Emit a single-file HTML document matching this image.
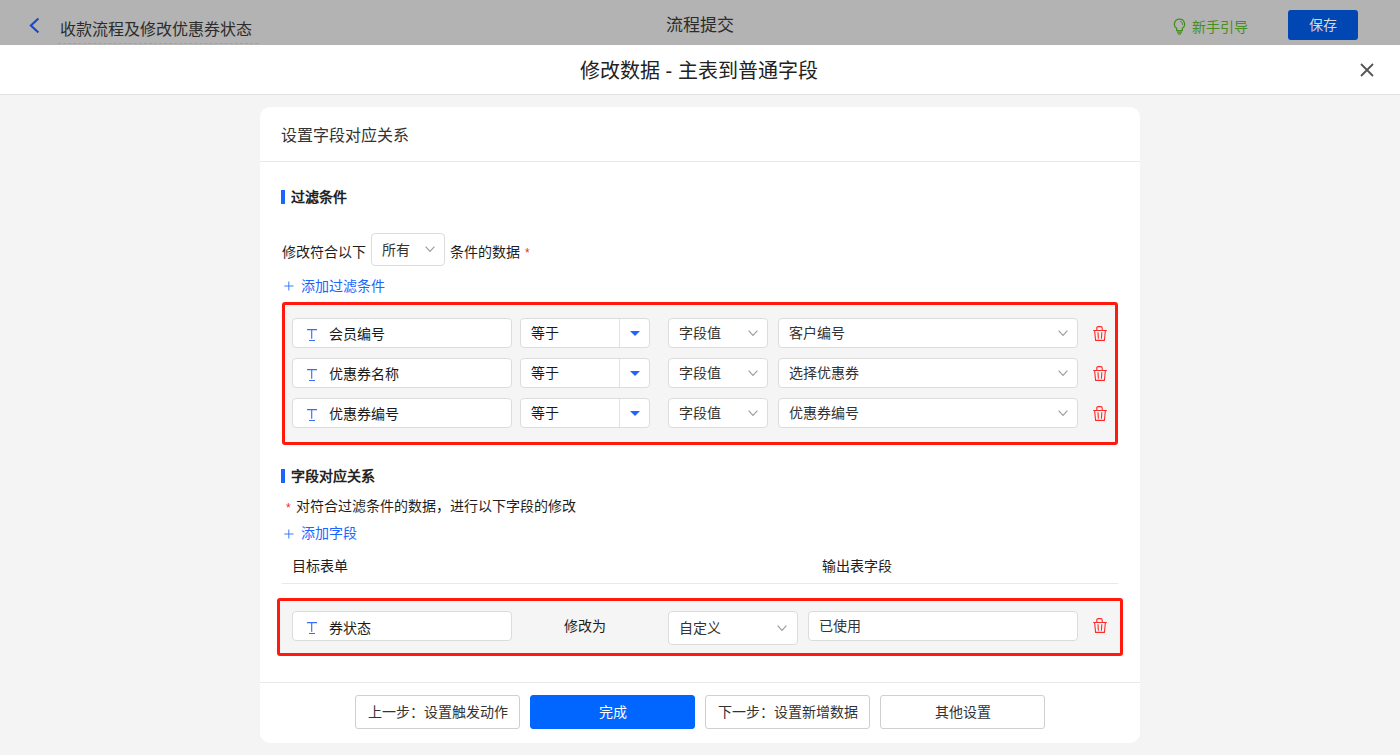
<!DOCTYPE html>
<html lang="zh-CN"><head><meta charset="utf-8">
<style>
*{box-sizing:border-box;margin:0;padding:0}
html,body{width:1400px;height:755px;overflow:hidden;background:#f4f4f4;font-family:"Liberation Sans",sans-serif;color:#333}
.abs{position:absolute}
.topbar{position:absolute;left:0;top:0;width:1400px;height:45px;background:#b3b3b3}
.mhead{position:absolute;left:0;top:45px;width:1400px;height:50px;background:#fff;border-bottom:1px solid #e3e3e3}
.card{position:absolute;left:260px;top:107px;width:880px;height:636px;background:#fff;border-radius:10px}
.t{position:absolute;white-space:nowrap;line-height:1}
.inp{position:absolute;background:#fff;border:1px solid #dcdcdc;border-radius:4px}
.redbox{position:absolute;border:3px solid #ff1a0d;background:#f5f5f5;border-radius:3px}
.chev{position:absolute;width:7px;height:7px;border-right:1px solid #888;border-bottom:1px solid #888;transform:rotate(45deg)}
.tri{position:absolute;width:0;height:0;border-left:5px solid transparent;border-right:5px solid transparent;border-top:5.5px solid #1a66ff}
.btn{position:absolute;top:695px;height:34px;border:1px solid #d0d0d0;border-radius:3px;background:#fff;font-size:14px;text-align:center;line-height:32px;color:#333}
</style></head>
<body>
<div class="topbar">
  <svg class="abs" style="left:28px;top:16px" width="13" height="19" viewBox="0 0 13 19"><path d="M10.4 2.4L2.9 9.4L10.4 16.4" fill="none" stroke="#1a47c9" stroke-width="2.1"/></svg>
  <div class="t" style="left:60px;top:22px;font-size:16px;color:#2c2c2c">收款流程及修改优惠券状态</div>
  <div class="abs" style="left:58px;top:43px;width:200px;border-top:1px dashed #a0a0a0"></div>
  <div class="t" style="left:666px;top:17px;font-size:17px;color:#2c2c2c">流程提交</div>
  <svg class="abs" style="left:1173px;top:18px" width="13" height="17" viewBox="0 0 13 17"><path d="M6.5 1.2a5 5 0 0 0-2.8 9.2v2.3h5.6v-2.3a5 5 0 0 0-2.8-9.2z" fill="none" stroke="#468f1c" stroke-width="1.3"/><path d="M4 14.2h5M4.8 15.8h3.4" stroke="#468f1c" stroke-width="1.2"/><path d="M7.2 3.2a3.6 3.6 0 0 1 2.4 3.6" fill="none" stroke="#468f1c" stroke-width="1"/></svg>
  <div class="t" style="left:1192px;top:20px;font-size:14px;color:#468f1c">新手引导</div>
  <div class="abs" style="left:1288px;top:10px;width:70px;height:30px;background:#0047b3;border-radius:3px;color:#d8d8d8;font-size:14px;text-align:center;line-height:30px">保存</div>
</div>
<div class="mhead">
  <div class="t" style="left:580px;top:16px;font-size:20px;color:#222">修改数据 - 主表到普通字段</div>
  <svg class="abs" style="left:1360px;top:18px" width="14" height="14" viewBox="0 0 14 14"><path d="M1 1L13 13M13 1L1 13" stroke="#555" stroke-width="1.8"/></svg>
</div>
<div class="card"></div>
<div class="t" style="left:281px;top:128px;font-size:16px;color:#333">设置字段对应关系</div>
<div class="abs" style="left:260px;top:161px;width:880px;border-top:1px solid #e8e8e8"></div>
<div class="abs" style="left:281px;top:190px;width:4px;height:14px;background:#1a66ff"></div>
<div class="t" style="left:291px;top:190px;font-size:14px;font-weight:bold;color:#222">过滤条件</div>
<div class="t" style="left:282px;top:245px;font-size:14px;color:#1e1e1e">修改符合以下</div>
<div class="inp" style="left:371px;top:233px;width:74px;height:33px"></div>
<div class="t" style="left:382px;top:243px;font-size:14px;color:#333">所有</div>
<svg class="abs" style="left:425px;top:246px" width="11" height="7" viewBox="0 0 11 7"><path d="M0.6 0.6L5 5.4L9.4 0.6" fill="none" stroke="#9a9a9a" stroke-width="1.1"/></svg>
<div class="t" style="left:450px;top:245px;font-size:14px;color:#1e1e1e">条件的数据</div>
<div class="t" style="left:525px;top:247px;font-size:12px;color:#f5222d">*</div>
<svg class="abs" style="left:284px;top:281px" width="10" height="10" viewBox="0 0 10 10"><path d="M4.8 0.5V9.5M0.3 5H9.5" stroke="#3d7bff" stroke-width="1"/></svg>
<div class="t" style="left:301px;top:279px;font-size:14px;color:#1a66ff">添加过滤条件</div>
<div class="redbox" style="left:282px;top:302px;width:836px;height:143px"></div>
<div class="inp" style="left:292px;top:318px;width:220px;height:30px"></div>
<svg class="abs" style="left:307px;top:329px" width="11" height="13" viewBox="0 0 11 13"><path d="M0 0.6H10M4.7 0.6V9.7M2 11.5H8" fill="none" stroke="#3a6bff" stroke-width="1.15"/></svg>
<div class="t" style="left:329px;top:327px;font-size:14px;color:#1a1a1a">会员编号</div>
<div class="inp" style="left:520px;top:318px;width:130px;height:30px"></div>
<div class="abs" style="left:619px;top:319px;height:28px;border-left:1px solid #e3e3e3"></div>
<div class="tri" style="left:630px;top:331px"></div>
<div class="t" style="left:531px;top:326px;font-size:14px;color:#1a1a1a">等于</div>
<div class="inp" style="left:668px;top:318px;width:100px;height:30px"></div>
<div class="t" style="left:679px;top:326px;font-size:14px;color:#333">字段值</div>
<svg class="abs" style="left:748px;top:330px" width="11" height="7" viewBox="0 0 11 7"><path d="M0.6 0.6L5 5.4L9.4 0.6" fill="none" stroke="#9a9a9a" stroke-width="1.1"/></svg>
<div class="inp" style="left:778px;top:318px;width:300px;height:30px"></div>
<div class="t" style="left:789px;top:326px;font-size:14px;color:#333">客户编号</div>
<svg class="abs" style="left:1058px;top:330px" width="11" height="7" viewBox="0 0 11 7"><path d="M0.6 0.6L5 5.4L9.4 0.6" fill="none" stroke="#9a9a9a" stroke-width="1.1"/></svg>
<svg class="abs" style="left:1092px;top:325px" width="16" height="17" viewBox="0 0 16 17"><path d="M1.2 5.5H14.8M4.8 5.5V3a1.4 1.4 0 0 1 1.4-1.4h2.6a1.4 1.4 0 0 1 1.4 1.4V5.5M2.6 5.5L3.6 15.4H12.4L13.4 5.5M6 7.2L6.4 13.8M9.8 7.2L9.4 13.8" fill="none" stroke="#ff2a2a" stroke-width="1.1"/></svg>
<div class="inp" style="left:292px;top:358px;width:220px;height:30px"></div>
<svg class="abs" style="left:307px;top:369px" width="11" height="13" viewBox="0 0 11 13"><path d="M0 0.6H10M4.7 0.6V9.7M2 11.5H8" fill="none" stroke="#3a6bff" stroke-width="1.15"/></svg>
<div class="t" style="left:329px;top:367px;font-size:14px;color:#1a1a1a">优惠券名称</div>
<div class="inp" style="left:520px;top:358px;width:130px;height:30px"></div>
<div class="abs" style="left:619px;top:359px;height:28px;border-left:1px solid #e3e3e3"></div>
<div class="tri" style="left:630px;top:371px"></div>
<div class="t" style="left:531px;top:366px;font-size:14px;color:#1a1a1a">等于</div>
<div class="inp" style="left:668px;top:358px;width:100px;height:30px"></div>
<div class="t" style="left:679px;top:366px;font-size:14px;color:#333">字段值</div>
<svg class="abs" style="left:748px;top:370px" width="11" height="7" viewBox="0 0 11 7"><path d="M0.6 0.6L5 5.4L9.4 0.6" fill="none" stroke="#9a9a9a" stroke-width="1.1"/></svg>
<div class="inp" style="left:778px;top:358px;width:300px;height:30px"></div>
<div class="t" style="left:789px;top:366px;font-size:14px;color:#333">选择优惠券</div>
<svg class="abs" style="left:1058px;top:370px" width="11" height="7" viewBox="0 0 11 7"><path d="M0.6 0.6L5 5.4L9.4 0.6" fill="none" stroke="#9a9a9a" stroke-width="1.1"/></svg>
<svg class="abs" style="left:1092px;top:365px" width="16" height="17" viewBox="0 0 16 17"><path d="M1.2 5.5H14.8M4.8 5.5V3a1.4 1.4 0 0 1 1.4-1.4h2.6a1.4 1.4 0 0 1 1.4 1.4V5.5M2.6 5.5L3.6 15.4H12.4L13.4 5.5M6 7.2L6.4 13.8M9.8 7.2L9.4 13.8" fill="none" stroke="#ff2a2a" stroke-width="1.1"/></svg>
<div class="inp" style="left:292px;top:398px;width:220px;height:30px"></div>
<svg class="abs" style="left:307px;top:409px" width="11" height="13" viewBox="0 0 11 13"><path d="M0 0.6H10M4.7 0.6V9.7M2 11.5H8" fill="none" stroke="#3a6bff" stroke-width="1.15"/></svg>
<div class="t" style="left:329px;top:407px;font-size:14px;color:#1a1a1a">优惠券编号</div>
<div class="inp" style="left:520px;top:398px;width:130px;height:30px"></div>
<div class="abs" style="left:619px;top:399px;height:28px;border-left:1px solid #e3e3e3"></div>
<div class="tri" style="left:630px;top:411px"></div>
<div class="t" style="left:531px;top:406px;font-size:14px;color:#1a1a1a">等于</div>
<div class="inp" style="left:668px;top:398px;width:100px;height:30px"></div>
<div class="t" style="left:679px;top:406px;font-size:14px;color:#333">字段值</div>
<svg class="abs" style="left:748px;top:410px" width="11" height="7" viewBox="0 0 11 7"><path d="M0.6 0.6L5 5.4L9.4 0.6" fill="none" stroke="#9a9a9a" stroke-width="1.1"/></svg>
<div class="inp" style="left:778px;top:398px;width:300px;height:30px"></div>
<div class="t" style="left:789px;top:406px;font-size:14px;color:#333">优惠券编号</div>
<svg class="abs" style="left:1058px;top:410px" width="11" height="7" viewBox="0 0 11 7"><path d="M0.6 0.6L5 5.4L9.4 0.6" fill="none" stroke="#9a9a9a" stroke-width="1.1"/></svg>
<svg class="abs" style="left:1092px;top:405px" width="16" height="17" viewBox="0 0 16 17"><path d="M1.2 5.5H14.8M4.8 5.5V3a1.4 1.4 0 0 1 1.4-1.4h2.6a1.4 1.4 0 0 1 1.4 1.4V5.5M2.6 5.5L3.6 15.4H12.4L13.4 5.5M6 7.2L6.4 13.8M9.8 7.2L9.4 13.8" fill="none" stroke="#ff2a2a" stroke-width="1.1"/></svg>
<div class="abs" style="left:281px;top:469px;width:4px;height:14px;background:#1a66ff"></div>
<div class="t" style="left:291px;top:469px;font-size:14px;font-weight:bold;color:#222">字段对应关系</div>
<div class="t" style="left:286px;top:502px;font-size:12px;color:#f5222d">*</div>
<div class="t" style="left:296px;top:499px;font-size:14px;color:#1e1e1e">对符合过滤条件的数据，进行以下字段的修改</div>
<svg class="abs" style="left:284px;top:529px" width="10" height="10" viewBox="0 0 10 10"><path d="M4.8 0.5V9.5M0.3 5H9.5" stroke="#3d7bff" stroke-width="1"/></svg>
<div class="t" style="left:301px;top:526px;font-size:14px;color:#1a66ff">添加字段</div>
<div class="t" style="left:292px;top:559px;font-size:14px;color:#1e1e1e">目标表单</div>
<div class="t" style="left:822px;top:559px;font-size:14px;color:#1e1e1e">输出表字段</div>
<div class="abs" style="left:282px;top:583px;width:836px;border-top:1px solid #e8e8e8"></div>
<div class="redbox" style="left:277px;top:598px;width:846px;height:58px"></div>
<div class="inp" style="left:292px;top:611px;width:220px;height:30px"></div>
<svg class="abs" style="left:307px;top:622px" width="11" height="13" viewBox="0 0 11 13"><path d="M0 0.6H10M4.7 0.6V9.7M2 11.5H8" fill="none" stroke="#3a6bff" stroke-width="1.15"/></svg>
<div class="t" style="left:329px;top:621px;font-size:14px;color:#1a1a1a">券状态</div>
<div class="t" style="left:564px;top:619px;font-size:14px;color:#1e1e1e">修改为</div>
<div class="inp" style="left:668px;top:611px;width:130px;height:34px"></div>
<div class="t" style="left:679px;top:621px;font-size:14px;color:#333">自定义</div>
<svg class="abs" style="left:777px;top:625px" width="11" height="7" viewBox="0 0 11 7"><path d="M0.6 0.6L5 5.4L9.4 0.6" fill="none" stroke="#9a9a9a" stroke-width="1.1"/></svg>
<div class="inp" style="left:808px;top:611px;width:270px;height:30px"></div>
<div class="t" style="left:819px;top:619px;font-size:14px;color:#333">已使用</div>
<svg class="abs" style="left:1092px;top:617px" width="16" height="17" viewBox="0 0 16 17"><path d="M1.2 5.5H14.8M4.8 5.5V3a1.4 1.4 0 0 1 1.4-1.4h2.6a1.4 1.4 0 0 1 1.4 1.4V5.5M2.6 5.5L3.6 15.4H12.4L13.4 5.5M6 7.2L6.4 13.8M9.8 7.2L9.4 13.8" fill="none" stroke="#ff2a2a" stroke-width="1.1"/></svg>
<div class="abs" style="left:260px;top:682px;width:880px;border-top:1px solid #e8e8e8"></div>
<div class="btn" style="left:355px;width:165px">上一步：设置触发动作</div>
<div class="btn" style="left:530px;width:165px;background:#0066ff;border-color:#0066ff;color:#fff">完成</div>
<div class="btn" style="left:705px;width:165px">下一步：设置新增数据</div>
<div class="btn" style="left:880px;width:165px">其他设置</div>
</body></html>
